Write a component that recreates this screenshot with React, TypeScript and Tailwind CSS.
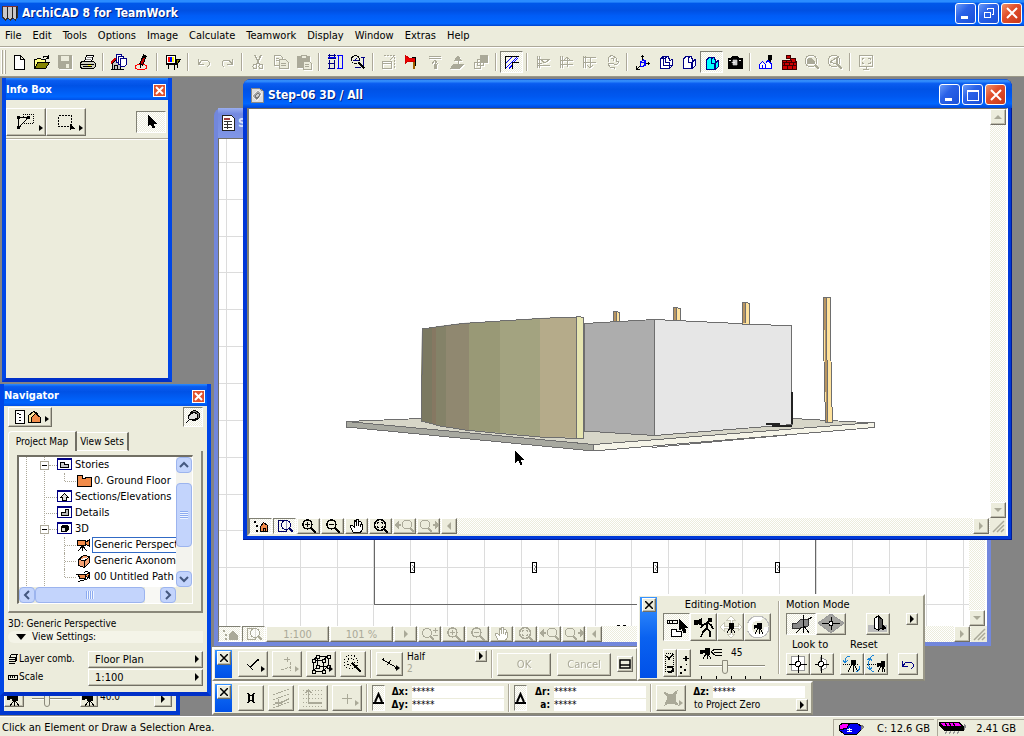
import type { ReactNode } from 'react';
import clsx from 'clsx';

const FACE = 'bg-[#ececdc]';
const DITHER = 'bg-[repeating-conic-gradient(#fff_0_25%,#ececdc_0_50%)] bg-[length:2px_2px]';
const RAISED =
  'border border-t-white border-l-white border-r-[#716f64] border-b-[#716f64] shadow-[inset_-1px_-1px_0_#bdbbab]';
const PRESSED = 'border border-t-[#808074] border-l-[#808074] border-r-white border-b-white';
const BLUE_TITLE = 'bg-[linear-gradient(#0a48d0_0,#3a96ff_6%,#0a5cf0_16%,#0052e6_35%,#0058f0_60%,#0066ff_85%,#0046d8_100%)]';

interface IconProps {
  children: ReactNode;
  size?: string;
  box?: string;
}

function Icon({ children, size = 'w-4 h-4', box = '0 0 16 16' }: IconProps) {
  return (
    <svg
      className={clsx('shrink-0', size)}
      viewBox={box}
      fill="none"
      stroke="currentColor"
      shapeRendering="crispEdges"
      aria-hidden="true"
    >
      {children}
    </svg>
  );
}

/* ---------- icon drawings ---------- */

const magnifier = (
  <>
    <circle cx="6.5" cy="6.5" r="4.5" strokeWidth="1.4" />
    <path d="M10 10l5 5" strokeWidth="2" />
  </>
);

const camera = (
  <>
    <path d="M1 4h3l2 1V2h5v7H6V7L4 8H1z" fill="currentColor" />
    <path d="M8.5 9v6M8 9.5L4 15M9 9.5L13 15" />
  </>
);

const art = {
  page: <path d="M3.5 1.5h6l4 4v10h-10zM9.5 1.5v4h4" fill="#fff" stroke="#000" />,
  open: (
    <>
      <path d="M.5 14V5.5h2l1-1h3l1 1h4v3" fill="#ffff84" stroke="#000" />
      <path d="M.5 14.5L4 8.5h11.5l-4 6z" fill="#848400" stroke="#000" />
      <path d="M9 3.5c1-2 4-2 5 0M14.5 1v3h-3" stroke="#000" />
    </>
  ),
  save: (
    <>
      <path d="M1.5 1.5h13v13h-12l-1-1z" fill="currentColor" />
      <path d="M4 2h8v5H4z" fill="#ececdc" stroke="none" />
      <path d="M9 10h3v4H9z" fill="#ececdc" stroke="none" />
    </>
  ),
  print: (
    <>
      <path d="M4.5 7.5l2-6h7l-2 6z" fill="#fff" stroke="#000" />
      <path d="M1.5 7.5h12l2 2v3l-2 2h-12l-1-2v-3z" fill="#d0d0c0" stroke="#000" />
      <path d="M1 10.5h13M3 12.5h9" stroke="#000" />
      <path d="M8 11h3v1H8z" fill="#ffff00" stroke="none" />
      <path d="M7 3.5h5M6 5.5h5" stroke="#888" />
    </>
  ),
  pages: (
    <>
      <path d="M1.5 15.5v-6l4-4 4 4v6z" fill="#c8c8c8" stroke="#000" />
      <path d="M0 9.5L5 4" stroke="#d00000" strokeWidth="2" />
      <path d="M5.5.5h5v8h-5z" fill="#fff" stroke="#000084" />
      <path d="M7.5 2.5h5v8h-5z" fill="#fff" stroke="#000084" />
      <path d="M9.5 4.5h6v6l-2 2h-4z" fill="#fff" stroke="#000084" />
      <path d="M3.5 15v-4h3v4M0 15.5h13" stroke="#000" />
    </>
  ),
  pen: (
    <>
      <ellipse cx="7" cy="13" rx="6" ry="2.5" stroke="#f00" />
      <path d="M7 11L11 1" stroke="#000" strokeWidth="4" />
      <path d="M7.5 10L10 4" stroke="#c00000" strokeWidth="2" />
      <path d="M6 10v4" stroke="#000" />
    </>
  ),
  easel: (
    <>
      <path d="M1.5 1.5h9v8h-9z" fill="#fff" stroke="#000" strokeWidth="1.5" />
      <path d="M3 3h2v5H3z" fill="#f00" stroke="none" />
      <path d="M5 3h2v5H5z" fill="#00f" stroke="none" />
      <path d="M7 3h2v5H7z" fill="#ff0" stroke="none" />
      <path d="M11 5.5h4.5L12 10h-1z" fill="#848400" stroke="#000" />
      <path d="M3.5 10v5M9.5 10v6M1 10.5h12M12.5 11v3" stroke="#000" />
    </>
  ),
  undo: <path d="M2.5 5v5.5H8M3 10l3-4h5l2 2v3l-2 2" />,
  redo: <path d="M13.5 5v5.5H8M13 10l-3-4H5L3 8v3l2 2" />,
  cut: (
    <>
      <path d="M5 1l4 9M11 1L7 10" strokeWidth="1.5" />
      <circle cx="5" cy="12.5" r="2" />
      <circle cx="11" cy="12.5" r="2" />
    </>
  ),
  copy: (
    <>
      <path d="M1.5 1.5h6l2 2v8h-8z" />
      <path d="M6.5 5.5h6l3 3v6h-9z" fill="#ececdc" />
      <path d="M3 4.5h3M3 6.5h3M8 9.5h5M8 11.5h5" />
    </>
  ),
  paste: (
    <>
      <path d="M1.5 2.5h12v11h-12z" fill="currentColor" />
      <path d="M5 1h5v3H5z" fill="#ececdc" />
      <path d="M7.5 7.5h6l2 2v6h-8z" fill="#ececdc" />
      <path d="M9 10.5h4M9 12.5h4" />
    </>
  ),
  grid: (
    <>
      <path d="M1 1.5h8M1 4.5h8M1 9.5h7M1 14.5h7M2.5 6v9M7.5 6v9M2.5 0v4M7.5 0v4" stroke="#000084" />
      <path d="M11.5 1v14M15.5 1v14M10 1.5h6M10 14.5h6M1 3.5h8" stroke="#0000ff" />
    </>
  ),
  find: (
    <>
      <circle cx="5.5" cy="5.5" r="4" stroke="#000" />
      <path d="M8.5 8.5l6 6" stroke="#000" strokeWidth="2" />
      <path d="M3 6.5h6M13.5 3v9M11 3.5h4M5 13.5h6M7 4L4 7" stroke="#000084" />
    </>
  ),
  stretch: (
    <>
      <path d="M1.5 7.5h9v7h-9zM1 9.5h9" />
      <path d="M2.5 1.5h11v12" strokeDasharray="2 1" />
      <path d="M9 6l4-4" />
    </>
  ),
  axe: (
    <>
      <path d="M9.5 7v8" stroke="#a06000" strokeWidth="2" />
      <path d="M1.5 1.5L5 4h6v3H5L1.500 9z" fill="#f00000" stroke="#d00000" />
      <path d="M8 3.5h3v4M11.5 8v4" stroke="#000" />
    </>
  ),
  raise: <path d="M2 2.5h12M2 4.5h12M8 6v9M5 10l3-4 3 4M7 10v5M9 10v5" />,
  lift: <path d="M1 14l3-4h10l-4 4zM8 12V4M5 6l3-4 3 4z" fill="currentColor" />,
  layers: (
    <>
      <path d="M1.5 8.5h6v6h-6zM4.5 5.5h6v6h-6z" />
      <path d="M7.5 1.5h7v7h-7z" fill="currentColor" />
    </>
  ),
  hatch: (
    <>
      <path d="M1.5 15V2.5H14.5M14.5 8.5H8.5V15" stroke="#000" />
      <path d="M2 9l6-6M2 14l11-11M5 14.5l3-3M10 8l4-4" stroke="#0000ff" strokeWidth="1.3" />
    </>
  ),
  levelDown: <path d="M2.5 2v12M4.5 2v12M2 5.5h13M2 11.5h13M6 6l4 3 4-3M3 9.5h4" />,
  levelMid: <path d="M2.5 2v12M4.5 2v12M2 6.5h13M2 10.5h13M9 3v10M6 6l3-3 3 3" />,
  levelUp: <path d="M2.5 2v12M4.5 2v12M2 3.5h13M2 8.5h13M9 4v10M6 11l3 3 3-3" />,
  seahorse: <path d="M5 8L4 4l4-3 4 3v3l3 1-3 3-4-2-4 1 2 3h4v2M7 4h2v3" />,
  axes: (
    <>
      <path d="M7.5 7V1M9 9.5h6M6 11l-4 4M6 2.5h3M13.5 8v3M1.5 12v3.5H5" stroke="#000" />
      <path d="M5.5 8l3-2 2 1v4l-2 1h-3zM5 8.500h4v3M9 8l2-1" stroke="#0000ff" />
    </>
  ),
  wireframe: (
    <>
      <path d="M2.5 4.500l3-2h5l1 4 3-1v6l-3 3h-9z" fill="#fff" stroke="#000084" strokeWidth="1.2" />
      <path d="M2 4.500h5v4h4v6M7 4l3-2M5.500 3v9M5 11.500h9" stroke="#000084" />
    </>
  ),
  hidden: (
    <path d="M2.5 4.5l3-2h5l1 4 3-1v6l-3 3h-9zM7 4.500l1 4h3v6M7 4l3-2M11 8l3-2" fill="#fff" stroke="#000084" strokeWidth="1.2" />
  ),
  shaded: (
    <path d="M2.5 5.5l3-2h5l1 4 3-1v6l-3 3h-9zM7 5.500l1 4h3v6M7 5l3-2M11 9l3-2" fill="#00ffff" stroke="#000084" strokeWidth="1.2" />
  ),
  photo: (
    <>
      <path d="M1 4h3l2-2h4l2 2h3v10H1z" fill="#000" stroke="#000" />
      <circle cx="8" cy="8.5" r="3" fill="#ccc" stroke="#444" />
      <path d="M2 6.500h2M12 6.500h2M6 8h2" stroke="#eee" />
    </>
  ),
  brushHouse: (
    <>
      <path d="M10.500 1h3v4l-1 2h-1l-1-2zM12 8v2" fill="#000" stroke="#000" />
      <path d="M1.500 14.500v-4l3-3 3 3v4zM8 8.500l2-2 3 3v5H8M4.500 14v-3" fill="#fff" stroke="#0000ff" />
    </>
  ),
  bricks: (
    <>
      <path d="M1 6h8V4h5v3h1v8H1zM5 1h4v3H5z" fill="#d00000" stroke="#400000" />
      <path d="M1 8.500h14M1 11.500h14M5 6v2M10 6v2M3 9v2M8 9v2M12 9v2M6 12v3M11 12v3" stroke="#400000" />
    </>
  ),
  lensCam: (
    <>
      <circle cx="7" cy="7" r="6" />
      <path d="M11 11l4 4" strokeWidth="2" />
      <path d="M3 9V6l3-2 4 3v2z" fill="currentColor" />
    </>
  ),
  lensMeasure: (
    <>
      <circle cx="7" cy="7" r="6" />
      <path d="M11 11l4 4" strokeWidth="2" />
      <path d="M3 8l6-4v6zM10 3v9" />
    </>
  ),
  monitor: (
    <path d="M1.500 1.500h13v11h-13zM5 15.500h6M8 12v3M4 6V4.500h2M10 4.500h2V6M4 8v1.500h2M10 9.500h2V8" />
  ),
  tree: (
    <>
      <path d="M1 4.500h2M3 8.500h2M3 12.500h2" strokeWidth="2" />
      <path d="M7 13V9l4-4 4 4v4z" fill="currentColor" />
    </>
  ),
  treeOrange: (
    <>
      <path d="M1 4h2M3 8h2M3 12.500h2" strokeWidth="2" />
      <path d="M7.500 13.500V8.500l3-4 4 3 .5 6z" fill="#f28c4a" />
      <path d="M10.500 13v-3h2v3" />
    </>
  ),
  preview: (
    <>
      <path d="M1.500 2.500h8v11h-8z" />
      <circle cx="9" cy="7" r="4.500" fill="#fff" fillOpacity=".6" />
      <path d="M12 10l4 4" strokeWidth="2" />
    </>
  ),
  zoomIn: (
    <>
      {magnifier}
      <path d="M4 6.500h5M6.500 4v5" strokeWidth="1.500" />
    </>
  ),
  zoomOut: (
    <>
      {magnifier}
      <path d="M4 6.500h5" strokeWidth="1.500" />
    </>
  ),
  zoomPm: (
    <>
      <circle cx="5" cy="7" r="4.500" />
      <path d="M8 10l4 4" strokeWidth="2" />
      <path d="M11 4.500h5M13.500 2v5M11 9.500h5" strokeWidth="1.500" />
    </>
  ),
  fit: (
    <>
      <circle cx="7" cy="7" r="5.500" strokeWidth="1.500" />
      <path d="M11 11l4 4" strokeWidth="2" />
      <path d="M4.500 6V4.500H6M8 4.500h1.500V6M9.500 8v1.500H8M6 9.500H4.500V8" />
    </>
  ),
  zoomPrev: (
    <>
      <path d="M1 7h5M3 5L1 7l2 2z" strokeWidth="1.500" fill="currentColor" />
      <circle cx="12" cy="6.500" r="4.500" />
      <path d="M15 10l4 4" strokeWidth="2" />
    </>
  ),
  zoomNext: (
    <>
      <circle cx="6" cy="6.500" r="4.500" />
      <path d="M9 10l4 4" strokeWidth="2" />
      <path d="M14 7h5M17 5l2 2-2 2z" strokeWidth="1.500" fill="currentColor" />
    </>
  ),
  hand: (
    <path
      fill="#fff"
      d="M4.500 14.500L1.500 9.500V7.500H3.500L5 9V3.500L6 2.500L7 3.500V2L8.500 1.500L9.500 2V3.500L11 3L12 4V6L13.500 6V11L11.500 14.500ZM7.500 4v4M9.500 4v4M11.500 6v3"
    />
  ),
};

function Tri({ dir }: { dir: 'right' | 'left' | 'down' | 'up' }) {
  const d = {
    right: 'M2 0l4 4-4 4z',
    left: 'M6 0L2 4l4 4z',
    down: 'M0 2h8L4 6z',
    up: 'M0 6h8L4 2z',
  }[dir];
  return (
    <svg className="w-2 h-2 shrink-0" viewBox="0 0 8 8" fill="currentColor" aria-hidden="true">
      <path d={d} />
    </svg>
  );
}

interface BtnProps {
  label: string;
  className?: string;
  children?: ReactNode;
  pressed?: boolean;
  disabled?: boolean;
  more?: boolean;
}

function Btn({ label, className, children, pressed, disabled, more }: BtnProps) {
  return (
    <button
      type="button"
      aria-label={label}
      disabled={disabled}
      className={clsx(
        'relative flex shrink-0 items-center justify-center overflow-hidden',
        pressed ? [PRESSED, DITHER] : [RAISED, FACE],
        disabled && 'text-[#aaa998]',
        className,
      )}
    >
      {children}
      {more && (
        <svg className="absolute right-0.5 bottom-1 w-1 h-1.5" viewBox="0 0 4 6" fill="currentColor" aria-hidden="true">
          <path d="M0 0l4 3-4 3z" />
        </svg>
      )}
    </button>
  );
}

/* ---------- main window chrome ---------- */

function CaptionButtons({ restore }: { restore?: boolean }) {
  const base = 'flex w-[21px] h-[21px] items-center justify-center rounded-[3px] border border-white text-white';
  const blue = 'bg-[linear-gradient(135deg,#6a9bf8,#2a62e8_40%,#1a4fd8)]';
  return (
    <div className="flex shrink-0 gap-0.5">
      <button type="button" aria-label="Minimize" className={clsx(base, blue)}>
        <Icon><path d="M3 12.500h7" strokeWidth="3" /></Icon>
      </button>
      <button type="button" aria-label={restore ? 'Restore' : 'Maximize'} className={clsx(base, blue)}>
        <Icon>
          {restore ? (
            <path d="M3.500 7.500h6v5h-6zM3 7h7M6.500 5V3.500h6v6H11M6 3h7" />
          ) : (
            <>
              <path d="M2.500 3.500h11v10h-11z" />
              <path d="M2 4h12" strokeWidth="2" />
            </>
          )}
        </Icon>
      </button>
      <button
        type="button"
        aria-label="Close"
        className={clsx(base, 'bg-[linear-gradient(135deg,#f0946c,#e2502c_40%,#c8381a)]')}
      >
        <Icon><path d="M3 3l10 10M13 3L3 13" strokeWidth="2" shapeRendering="auto" /></Icon>
      </button>
    </div>
  );
}

function TitleBar() {
  return (
    <header className="flex h-[26px] shrink-0 items-center gap-1 bg-[linear-gradient(#2a8cff_0,#2a8cff_8%,#0058ea_12%,#0050e2_40%,#005cf6_60%,#0066ff_90%,#0042cc_100%)] pr-0.5 pl-0.5 text-white">
      <Icon>
        <path d="M.5 1h15v11l-2 3-3-2-2 2-3-2-2 2-3-3z" fill="#c8c8c8" stroke="#333" />
        <path d="M5.500 1v13M10.500 1v13M14.500 2v11" stroke="#222" strokeWidth="1.500" />
        <path d="M1 1.500h14" stroke="#803030" />
      </Icon>
      <h1 className="flex-1 truncate text-[12px] leading-4 font-bold [text-shadow:1px_1px_#00207c]">
        ArchiCAD 8 for TeamWork
      </h1>
      <CaptionButtons restore />
    </header>
  );
}

const menus = ['File', 'Edit', 'Tools', 'Options', 'Image', 'Calculate', 'Teamwork', 'Display', 'Window', 'Extras', 'Help'];

function MenuBar() {
  return (
    <nav className="flex h-[21px] shrink-0 items-center gap-[11px] border-b border-[#aca899] pl-[5px]">
      {menus.map((m) => (
        <button key={m} type="button" className="leading-4">{m}</button>
      ))}
    </nav>
  );
}

interface Tool {
  name: string;
  icon: ReactNode;
  off?: boolean;
  on?: boolean;
}

const toolGroups: Tool[][] = [
  [
    { name: 'New', icon: art.page },
    { name: 'Open', icon: art.open },
    { name: 'Save', icon: art.save, off: true },
    { name: 'Print', icon: art.print },
  ],
  [
    { name: 'Send changes', icon: art.pages },
    { name: 'Mark up', icon: art.pen },
  ],
  [{ name: 'Plot', icon: art.easel }],
  [
    { name: 'Undo', icon: art.undo, off: true },
    { name: 'Redo', icon: art.redo, off: true },
  ],
  [
    { name: 'Cut', icon: art.cut, off: true },
    { name: 'Copy', icon: art.copy, off: true },
    { name: 'Paste', icon: art.paste, off: true },
  ],
  [
    { name: 'Grids', icon: art.grid },
    { name: 'Find and select', icon: art.find },
  ],
  [
    { name: 'Resize', icon: art.stretch, off: true },
    { name: 'Split', icon: art.axe },
    { name: 'Adjust', icon: art.raise, off: true },
    { name: 'Elevate', icon: art.lift, off: true },
    { name: 'Bring forward', icon: art.layers, off: true },
  ],
  [{ name: 'Hatching', icon: art.hatch, on: true }],
  [
    { name: 'Level down', icon: art.levelDown, off: true },
    { name: 'Level', icon: art.levelMid, off: true },
    { name: 'Level up', icon: art.levelUp, off: true },
    { name: 'Morph', icon: art.seahorse, off: true },
  ],
  [
    { name: '3D projection', icon: art.axes },
    { name: 'Wireframe', icon: art.wireframe },
    { name: 'Hidden line', icon: art.hidden },
    { name: 'Shading', icon: art.shaded, on: true },
    { name: 'PhotoRender', icon: art.photo },
  ],
  [
    { name: 'Paint model', icon: art.brushHouse },
    { name: 'Materials', icon: art.bricks },
    { name: 'Zoom camera', icon: art.lensCam, off: true },
    { name: 'Zoom measure', icon: art.lensMeasure, off: true },
  ],
  [{ name: 'Full screen', icon: art.monitor, off: true }],
];

function Toolbar() {
  return (
    <div className="flex h-[30px] shrink-0 items-center border-t border-b border-t-white border-b-[#9a9888] pl-px">
      <div className="flex h-6 w-1.5 gap-px">
        <span className="w-0.5 border-r border-l border-l-white border-r-[#aca899]" />
        <span className="w-0.5 border-r border-l border-l-white border-r-[#aca899]" />
      </div>
      {toolGroups.map((group, i) => (
        <div key={i} className="flex items-center">
          {i > 0 && (
            <span className="flex w-2 justify-center">
              <span className="h-[18px] w-0.5 border-l border-r border-l-[#aca899] border-r-white" />
            </span>
          )}
          {group.map((t) => (
            <button
              key={t.name}
              type="button"
              aria-label={t.name}
              disabled={t.off}
              className={clsx(
                'flex h-[22px] w-[23px] items-center justify-center',
                t.on && [PRESSED, DITHER],
                t.off && 'text-[#aaa998] drop-shadow-[1px_1px_0_#fff]',
              )}
            >
              <Icon>{t.icon}</Icon>
            </button>
          ))}
        </div>
      ))}
    </div>
  );
}

/* ---------- document windows ---------- */

interface DocTool {
  name: string;
  icon: ReactNode;
  wide?: boolean;
}

const docTools: DocTool[] = [
  { name: 'Zoom in', icon: art.zoomIn },
  { name: 'Zoom out', icon: art.zoomOut },
  { name: 'Pan', icon: art.hand },
  { name: 'Fit in window', icon: art.fit },
  { name: 'Previous zoom', icon: art.zoomPrev, wide: true },
  { name: 'Next zoom', icon: art.zoomNext, wide: true },
];

function VScroll() {
  return (
    <div className={clsx('flex w-4 shrink-0 flex-col justify-between', DITHER)}>
      <Btn label="Scroll up" disabled className="h-4 w-4"><Tri dir="up" /></Btn>
      <Btn label="Scroll down" disabled className="h-4 w-4"><Tri dir="down" /></Btn>
    </div>
  );
}

function DocBar({ dim }: { dim?: boolean }) {
  return (
    <div className={clsx('flex h-4 shrink-0 gap-px', DITHER)}>
      <Btn label="Navigator" pressed disabled={dim} className="w-[23px]">
        <Icon>{dim ? art.tree : art.treeOrange}</Icon>
      </Btn>
      <Btn label="Preview" pressed disabled={dim} className={clsx('w-[23px]', !dim && 'text-[#000060]')}>
        <Icon>{art.preview}</Icon>
      </Btn>
      {dim && (
        <>
          <Btn label="Scale" disabled className="w-[63px]">1:100</Btn>
          <Btn label="Zoom" disabled className="w-[63px]">101 %</Btn>
          <Btn label="Zoom options" disabled className="w-[23px]"><Tri dir="right" /></Btn>
          <Btn label="Zoom factor" disabled className="w-[23px]"><Icon>{art.zoomPm}</Icon></Btn>
        </>
      )}
      {docTools.map((t) => (
        <Btn key={t.name} label={t.name} disabled={dim || t.wide} className="w-[23px]">
          <Icon box={t.wide ? '0 0 20 16' : '0 0 16 16'} size={t.wide ? 'w-5 h-4' : 'w-4 h-4'}>{t.icon}</Icon>
        </Btn>
      ))}
      <Btn label="Scroll left" disabled className="w-4"><Tri dir="left" /></Btn>
      <div className="flex-1" />
      <Btn label="Scroll right" disabled className="w-4"><Tri dir="right" /></Btn>
      <span className={clsx('w-4', FACE)}>
        <svg className="h-4 w-4" viewBox="0 0 16 16" stroke="#aaa998" strokeWidth="1.5" aria-hidden="true">
          <path d="M3 14L14 3M7 14l7-7M11 14l3-3" />
        </svg>
      </span>
    </div>
  );
}

const gridX = Array.from({ length: 21 }, (_, i) => Math.round(226 + i * 36.85));
const gridY = Array.from({ length: 14 }, (_, i) => Math.round(125 + i * 36.85));

function PlanCanvas() {
  return (
    <svg
      className="min-w-0 flex-1 bg-white"
      viewBox="219 139 751 487"
      preserveAspectRatio="xMinYMin slice"
      shapeRendering="crispEdges"
      fill="none"
      role="img"
      aria-label="Floor plan"
    >
      {gridX.map((x) => <path key={x} d={`M${x + 0.5} 139V626`} stroke="#dcdcdc" />)}
      {gridY.map((y) => <path key={y} d={`M219 ${y + 0.5}H970`} stroke="#dcdcdc" />)}
      <path d="M374.500 300V604.500H815.500V300" stroke="#686868" />
      {[410, 532, 653, 775].map((x) => (
        <g key={x}>
          <rect x={x + 0.5} y="562.5" width="4" height="10" fill="#fff" stroke="#000" />
          <path d={`M${x + 2} 565l2 2-2 2 2 2`} stroke="#888" />
        </g>
      ))}
      <path d="M617 625.500h3M623 625.500h3" stroke="#000" />
    </svg>
  );
}

const bands = [
  { x: 421, w: 11, c: '#7b7961' },
  { x: 432, w: 4, c: '#867862' },
  { x: 436, w: 10, c: '#848268' },
  { x: 446, w: 23, c: '#908870' },
  { x: 469, w: 31, c: '#999976' },
  { x: 500, w: 40, c: '#a3a380' },
  { x: 540, w: 36, c: '#b5ab8a' },
];

function ModelView() {
  const edge = '#6e6e6e';
  return (
    <svg
      className="min-w-0 flex-1 bg-white"
      viewBox="249 109 741 409"
      preserveAspectRatio="xMinYMin slice"
      shapeRendering="crispEdges"
      role="img"
      aria-label="3D model"
    >
      <defs>
        <clipPath id="curve">
          <path d="M422 329L440 326L463 323L500 321L540 318L577 317V438L540 437L500 433L465 430L440 426L421 421V375Z" />
        </clipPath>
      </defs>
      <g stroke={edge}>
        <path d="M346.500 421.500L421 418.500L600 412L793 418.500L874.500 423L593.500 444.500Z" fill="#d7d6c8" />
        <path d="M346.500 421.500L593.500 444.500V451L346.500 427Z" fill="#a8a9a0" />
        <path d="M593.500 444.500L874.500 422.500V427.500L593.500 451Z" fill="#f5f4e8" />
        <path d="M652 447.500L793 434.500" fill="none" />
      </g>
      <g clipPath="url(#curve)">
        {bands.map((b) => <rect key={b.x} x={b.x} y="310" width={b.w} height="132" fill={b.c} />)}
      </g>
      <g stroke={edge}>
        <path d="M422.500 375V329L440 326.500L463 323.500L500 321L540 318.500L570 317H577M421.500 375V421L440 426L465 430L500 433.500L540 437L577 438.500" fill="none" />
        <path d="M584 323.500L654.500 319.500V435.500L584 431Z" fill="#adadad" />
        <path d="M654.500 319.500L791.500 326V376L792.500 424.500L654.500 435.500Z" fill="#e6e6e6" />
        <path d="M576.500 317L580 316.500L583.500 318V438.500H576V377L576.500 370Z" fill="#e6e5b0" />
        <path d="M613.500 321V311.500H617L619.500 313V321" fill="#ffe29c" />
        <path d="M673.500 320V307.500H677L680.500 309V320.500" fill="#ffe29c" />
        <path d="M742.500 324V302.500H747L749.500 304V324Z" fill="#ffe29c" />
        <path d="M823.500 297.500H830.500V330L831.500 391L832.500 422.500H826L824.500 391L823.500 330Z" fill="#ffe29c" />
      </g>
      <path
        d="M614 312h2v9h-2zM674 308h2v12h-2zM743 303h2v20h-2zM824 298h2l1 62 1 62h-2l-1-62z"
        fill="#b89460"
      />
      <path d="M616.500 312v9M676.500 308v12M745.500 303v20M826.500 298v62M827.500 360v62" stroke={edge} />
      <path d="M792 392V424M766 424H780M772 426H792" stroke="#222" strokeWidth="2" />
      <path d="M515 451V463L518 460.500L520.500 465H522.500L521 460H524Z" fill="#000" />
    </svg>
  );
}

function PlanWindow() {
  return (
    <section className="absolute top-[31px] left-[214px] flex h-[538px] w-[777px] flex-col rounded-t-lg border-4 border-t-0 border-[#7287dc] bg-[#7287dc]">
      <header className="flex h-[30px] shrink-0 items-center gap-1.5 bg-[linear-gradient(#9aaef0,#7389e0_20%,#8096e6)] px-0.5">
        <Icon>
          <path d="M2.500.5h9l3 3v12h-12z" fill="#fff" stroke="#222" />
          <path d="M4 6.500h8M4 9.500h8M4 12.500h8M7.500 6v8" stroke="#333" strokeWidth="1.5" />
          <path d="M4 3.500h6" stroke="#a04040" strokeWidth="2" />
        </Icon>
        <h2 className="-ml-1 text-[12px] font-bold text-[#dbe3fb]">S</h2>
      </header>
      <div className="flex min-h-0 flex-1 border-t border-r-2 border-l border-t-[#716f64] border-r-white border-l-[#716f64]">
        <PlanCanvas />
        <VScroll />
      </div>
      <DocBar dim />
    </section>
  );
}

function ModelWindow() {
  return (
    <section className="absolute top-0.5 left-[243px] flex h-[461px] w-[769px] flex-col overflow-hidden rounded-t-lg bg-[#0038d8] px-1 pb-1 shadow-[inset_-1px_-1px_0_#001c98]">
      <header className={clsx('-mx-1 flex h-[29px] shrink-0 items-center gap-[3px] px-1.5 pt-0.5 text-white', BLUE_TITLE)}>
        <Icon>
          <path d="M2.500 1.500h8l4 3v11h-12z" fill="#ddd" stroke="#888" />
          <path d="M3 9l6-6 4 4-5 7z" fill="#a8a8a8" stroke="#eee" />
          <path d="M6 9l3-3 2 2-3 4z" fill="#ccc" stroke="#777" />
        </Icon>
        <h2 className="flex-1 truncate text-[12px] leading-4 font-bold [text-shadow:1px_1px_#00207c]">Step-06 3D / All</h2>
        <CaptionButtons />
      </header>
      <div className="flex min-h-0 flex-1 flex-col border-t border-r-2 border-b-2 border-l-2 border-t-[#716f64] border-r-white border-b-[#ececdc] border-l-[#808074]">
        <div className="flex min-h-0 flex-1">
          <ModelView />
          <VScroll />
        </div>
        <DocBar />
      </div>
    </section>
  );
}

/* ---------- palettes ---------- */

function PaletteTitle({ title }: { title: string }) {
  return (
    <header className="flex h-[22px] shrink-0 items-center justify-between bg-[linear-gradient(#2a8cff_0,#0a5cf0_12%,#0052e6_35%,#0066ff_85%,#0050e6_100%)] pt-0.5 text-white">
      <h2 className="text-[11px] leading-4 font-bold">{title}</h2>
      <button
        type="button"
        aria-label={`Close ${title}`}
        className="mr-0.5 flex h-[13px] w-[13px] items-center justify-center border border-white bg-[#e0532f]"
      >
        <svg className="h-[9px] w-[9px]" viewBox="0 0 9 9" stroke="#fff" strokeWidth="2" aria-hidden="true">
          <path d="M1 1l7 7M8 1L1 8" />
        </svg>
      </button>
    </header>
  );
}

function InfoBox() {
  return (
    <section className="absolute top-px left-0.5 flex h-[304px] w-[170px] flex-col border-4 border-t-0 border-[#0046e6] border-b-[#0030c8]">
      <PaletteTitle title="Info Box" />
      <div className={clsx('flex flex-1 flex-col', FACE)}>
        <div className="flex items-center border-b border-[#aca899] pt-2 pb-0.5 shadow-[0_1px_0_#fff]">
          <Btn label="Geometry method" more className="h-[28px] w-10">
            <Icon size="w-5 h-5" box="0 0 20 20">
              <path d="M2.500 5v11L12 5.500z" stroke="#000" />
              <path d="M1 4h3v3H1zM1 14h3v3H1zM11 4h3v3h-3z" fill="#000" stroke="none" />
              <path d="M6 11.500h11.500V2.500H7V5" stroke="#000" strokeDasharray="1 1" />
            </Icon>
          </Btn>
          <Btn label="Marquee method" more className="h-[28px] w-10">
            <Icon size="w-5 h-5" box="0 0 20 20">
              <path d="M2.500 3.500h13v11h-13z" strokeDasharray="2 1" />
              <path d="M14 12v6l2-2h2z" fill="currentColor" />
            </Icon>
          </Btn>
          <Btn label="Arrow tool" pressed className="mr-0.5 ml-auto h-[22px] w-[30px]">
            <Icon><path d="M5 1v11l3-2.500L10 14l1.500-.5L9.500 9H13z" fill="#000" stroke="#000" /></Icon>
          </Btn>
        </div>
      </div>
    </section>
  );
}

interface TreeRow {
  text: string;
  level: number;
  open?: boolean;
  active?: boolean;
  last?: boolean;
  icon: ReactNode;
}

const frame = (
  <>
    <path d="M.5 1.500h14v11H.5z" fill="#fff" stroke="#000084" />
    <path d="M0 2h15" stroke="#000084" strokeWidth="2" />
  </>
);

const treeRows: TreeRow[] = [
  { text: 'Stories', level: 0, open: true, icon: <>{frame}<path d="M3.500 5.500h4v2h4v3h-8z" fill="#ccc" stroke="#000" /></> },
  { text: '0. Ground Floor', level: 1, last: true, icon: <path d="M1 2.500h5v3h3v-1h6v9H1z" fill="#f28c4a" stroke="#000" /> },
  { text: 'Sections/Elevations', level: 0, icon: <>{frame}<path d="M5.500 11.500v-3h-2l4-4 4 4h-2v3z" fill="#ddd" stroke="#000" /></> },
  { text: 'Details', level: 0, icon: <>{frame}<path d="M8.500 4.500h3v6h-7v-3h4z" fill="#bbb" stroke="#000" /></> },
  {
    text: '3D', level: 0, open: true,
    icon: <>{frame}<path d="M4 6l3-2 4 1v4l-3 2-4-1z" fill="#000" stroke="#000" /><path d="M5 7h3v3H5z" fill="#ddd" stroke="none" /></>,
  },
  {
    text: 'Generic Perspect', level: 1, active: true,
    icon: <><path d="M1.500 3.500h8v5h-8zM9 6l4-3v6L9 7z" fill="#f28c4a" stroke="#000" /><path d="M6.500 9v5M6 9.500L2 14M7 9.500l4 4.500" stroke="#000" /></>,
  },
  {
    text: 'Generic Axonome', level: 1,
    icon: <path d="M2.500 6.500l5-4 6 1v6l-5 5-6-2zM3 6.500l5.500 1.500L13 4M8.500 8v6" fill="#f6a070" stroke="#000" />,
  },
  {
    text: '00 Untitled Path', level: 1, last: true,
    icon: <><path d="M2 5.500h7v4H4zM9 6l4-2v5l-4-2z" fill="#f28c4a" stroke="#000" /><path d="M0 5h3M2 13c3-3 7 0 10-4 3-5-1-9-4-5" stroke="#000" /></>,
  },
];

function TreeItem({ row }: { row: TreeRow }) {
  return (
    <li className={clsx('flex h-4 items-center whitespace-nowrap', row.level === 1 ? 'pl-[45px]' : 'pl-[21px]')}>
      {row.level === 0 ? (
        <span className="flex h-4 w-[17px] shrink-0 items-center">
          {row.open && (
            <span className="flex h-[9px] w-[9px] items-center justify-center border border-[#aca899] bg-white">
              <span className="h-px w-[5px] bg-black" />
            </span>
          )}
          <span className={clsx('flex-1 border-t border-dotted border-[#aca899]', !row.open && 'ml-1')} />
        </span>
      ) : (
        <span className="flex h-4 w-3 shrink-0 items-center">
          <span className={clsx('border-l border-dotted border-[#aca899]', row.last ? 'h-2 self-start' : 'h-4')} />
          <span className="flex-1 border-t border-dotted border-[#aca899]" />
        </span>
      )}
      <Icon>{row.icon}</Icon>
      <span className={clsx('border px-px leading-[14px]', row.active ? 'border-[#316ac5]' : 'border-transparent')}>{row.text}</span>
    </li>
  );
}

function XpScrollButton({ label, d }: { label: string; d: string }) {
  return (
    <button
      type="button"
      aria-label={label}
      className="flex h-4 w-4 shrink-0 items-center justify-center rounded-sm border border-[#9cb4ee] bg-[#c3d4fc]"
    >
      <svg className="h-2.5 w-2.5" viewBox="0 0 10 10" fill="none" stroke="#44587f" strokeWidth="2" aria-hidden="true">
        <path d={d} />
      </svg>
    </button>
  );
}

function SettingRow({ id, label, icon, value }: { id: string; label: string; icon: ReactNode; value: string }) {
  return (
    <div className="flex h-[18px] items-center">
      <label htmlFor={id} className="flex w-20 items-center gap-px whitespace-nowrap text-[10px]">
        <Icon size="w-2.5 h-2.5" box="0 0 10 10">{icon}</Icon>
        {label}
      </label>
      <div className="relative flex-1">
        <select id={id} defaultValue={value} className={clsx('block h-[17px] w-full appearance-none px-1.5', RAISED, FACE)}>
          <option>{value}</option>
        </select>
        <span className="pointer-events-none absolute top-1 right-0.5"><Tri dir="right" /></span>
      </div>
    </div>
  );
}

function Navigator() {
  return (
    <section className="absolute top-[307px] left-0 flex h-[312px] w-[211px] flex-col border-4 border-t-0 border-[#0046e6] border-b-[#0030c8]">
      <PaletteTitle title="Navigator" />
      <div className={clsx('flex flex-1 flex-col px-1 pt-px', FACE)}>
        <div className="flex items-center justify-between">
          <Btn label="Navigator view" more className="h-5 w-[44px] pr-1">
            <Icon size="w-8 h-4" box="0 0 32 16">
              <path d="M3.500 1.500h9v13h-9z" fill="#fff" stroke="#000" />
              <path d="M5 4.500h2M7 8.500h2M7 11.500h2M7 5.500h2" stroke="#000" strokeWidth="1.5" />
              <path d="M16.500 13.500V6.500l5-4 4 2v9z" fill="#fce29a" stroke="#000" />
              <path d="M19.500 13.500V8.500l4-4 5 4v5z" fill="#f28c4a" stroke="#000" />
            </Icon>
          </Btn>
          <Btn label="Project navigator" pressed className="h-5 w-5">
            <Icon>
              <path d="M5 4l5-3 4 3v5l-4 3-5-2z" fill="#888" stroke="#000" />
              <path d="M3 7l6-4 3 2v4l-3 2-5-1z" fill="#ddd" stroke="#000" />
              <path d="M1 14l4-4" stroke="#000" />
            </Icon>
          </Btn>
        </div>
        <div role="tablist" className="mt-1 flex items-end">
          <button type="button" role="tab" aria-selected="true" className="h-5 w-[69px] rounded-tl border-t border-r-2 border-l border-t-white border-r-[#716f64] border-l-white text-[10px] whitespace-nowrap">
            Project Map
          </button>
          <button type="button" role="tab" aria-selected="false" className="h-[19px] w-[52px] border-t border-r-2 border-b border-t-white border-r-[#716f64] border-b-white text-[10px] whitespace-nowrap">
            View Sets
          </button>
        </div>
        <div className="border-r-2 border-b-2 border-l border-r-[#8a887a] border-b-[#8a887a] border-l-white pt-1 pr-2 pb-[7px] pl-2">
          <div className="border-t-2 border-r border-b border-l-2 border-t-[#716f64] border-r-white border-b-white border-l-[#716f64] bg-white">
            <div className="flex">
              <ul className="h-[130px] min-w-0 flex-1 overflow-hidden [background:linear-gradient(#aca899_50%,#fff_50%)_7px_0/1px_2px_repeat-y,linear-gradient(#aca899_50%,#fff_50%)_25px_0/1px_2px_repeat-y]">
                {treeRows.map((r) => <TreeItem key={r.text} row={r} />)}
              </ul>
              <div className="flex w-4 shrink-0 flex-col bg-[#f3f3ee]">
                <XpScrollButton label="Scroll tree up" d="M1 7l4-4 4 4" />
                <span className="mt-2.5 flex flex-1 items-center justify-center rounded-sm border border-[#9cb4ee] bg-[#c3d4fc]">
                  <span className="h-2 w-2 bg-[repeating-linear-gradient(#8caaf0_0_1px,#eef4ff_1px_2px)]" />
                </span>
                <span className="h-6" />
                <XpScrollButton label="Scroll tree down" d="M1 3l4 4 4-4" />
              </div>
            </div>
            <div className={clsx('flex pr-4', FACE)}>
              <XpScrollButton label="Scroll tree left" d="M7 1L3 5l4 4" />
              <span className="flex w-[110px] items-center justify-center rounded-sm border border-[#9cb4ee] bg-[#c3d4fc]">
                <span className="h-2 w-2 bg-[repeating-linear-gradient(90deg,#8caaf0_0_1px,#eef4ff_1px_2px)]" />
              </span>
              <span className="flex-1 bg-[#f8f8f4]" />
              <XpScrollButton label="Scroll tree right" d="M3 1l4 4-4 4" />
            </div>
          </div>
        </div>
        <p className="mt-1 h-[14px] text-[10px] leading-[14px]">3D: Generic Perspective</p>
        <button type="button" className="flex h-3 items-center gap-1.5 rounded-l-full bg-[#f4f4e8] pl-2 text-[10px]">
          <svg className="h-2.5 w-2.5" viewBox="0 0 10 10" aria-hidden="true"><path d="M0 2h10L5 8z" /></svg>
          View Settings:
        </button>
        <div className="mt-[7px] flex flex-col">
          <SettingRow id="layers" label="Layer comb." value="Floor Plan" icon={<path d="M3.500.5h6l-2 3h-6zM1 5.500h6l2-2M1 7.500h6l2-2M1 9.500h6" />} />
          <SettingRow id="scale" label="Scale" value="1:100" icon={<path d="M.5 3.500h9v4h-9zM2.500 4v2M4.500 4v2M6.500 4v2" />} />
        </div>
      </div>
    </section>
  );
}

const SLIDER =
  'appearance-none bg-transparent [&::-webkit-slider-runnable-track]:h-0.5 [&::-webkit-slider-runnable-track]:border-t [&::-webkit-slider-runnable-track]:border-[#8a887a] [&::-webkit-slider-runnable-track]:bg-white [&::-webkit-slider-thumb]:-mt-1.5 [&::-webkit-slider-thumb]:h-3.5 [&::-webkit-slider-thumb]:w-1.5 [&::-webkit-slider-thumb]:appearance-none [&::-webkit-slider-thumb]:rounded-b-md [&::-webkit-slider-thumb]:border [&::-webkit-slider-thumb]:border-[#8a887a] [&::-webkit-slider-thumb]:bg-[#ececdc]';

function ViewPalette() {
  return (
    <section className="absolute top-[580px] left-0 flex h-[58px] w-[180px] flex-col justify-end border-4 border-[#0038d0]">
      <div className={clsx('flex flex-1 items-end gap-2 pb-1', FACE)}>
        <Btn label="Zoom camera out" className="h-4 w-5"><Icon>{camera}</Icon></Btn>
        <input type="range" aria-label="View cone" defaultValue={35} className={clsx('h-4 w-10', SLIDER)} />
        <Btn label="Zoom camera in" className="h-4 w-[18px]"><Icon>{camera}</Icon></Btn>
        <span className="-ml-1.5 h-4 text-[10px] leading-3">40.0°</span>
        <Btn label="View options" className="mr-1 ml-auto h-4 w-[18px]"><Tri dir="right" /></Btn>
      </div>
    </section>
  );
}

function Handle({ label }: { label: string }) {
  return (
    <div className="flex w-[17px] shrink-0 justify-center self-stretch bg-[linear-gradient(#3a94ff,#0a62f0_50%,#0050e8)] pt-px">
      <Btn label={label} className="h-3.5 w-3.5">
        <svg className="h-2 w-2" viewBox="0 0 8 8" stroke="#000" strokeWidth="1.500" aria-hidden="true">
          <path d="M0 0l8 8M8 0L0 8" />
        </svg>
      </Btn>
    </div>
  );
}

function Divider() {
  return <span className="w-0.5 shrink-0 self-stretch border-l border-r border-l-[#aca899] border-r-white" />;
}

const BAR = 'absolute flex items-center border-2 border-t-white border-l-white border-r-[#9a9888] border-b-[#8a887a]';

function ControlBox() {
  return (
    <section className={clsx(BAR, FACE, 'top-[570px] left-[212px] h-[34px] w-[426px] gap-1 p-px')} aria-label="Control box">
      <Handle label="Close control box" />
      <Btn label="Relative construction" more className="ml-0.5 h-[26px] w-[30px]">
        <Icon><path d="M2 8l6 6M5 12l8-9M12 4h2" strokeWidth="1.3" /></Icon>
      </Btn>
      <Btn label="Snap guides" more disabled className="h-[26px] w-[30px]">
        <Icon><path d="M5 3.500h6M8 1v5" /><path d="M2 14l9-3M12 6l-1 9" strokeDasharray="3 1" /></Icon>
      </Btn>
      <Btn label="Element group" more className="h-[26px] w-[30px]">
        <Icon size="w-5 h-5" box="0 0 20 20">
          <path d="M2.500 6.500h10v11h-10zM6.500 2.500h11v10h-11zM2 17l5-5M12 17l5-5M2 6l5-4M12 6l5-4" />
          <path d="M1 5h3v3H1zM11 5h3v3h-3zM1 16h3v3H1zM11 16h3v3h-3zM5 1h3v3H5zM16 1h3v3h-3zM16 11h3v3h-3zM5 11h3v3H5z" fill="#ececdc" />
        </Icon>
      </Btn>
      <Btn label="Magic wand" className="h-[26px] w-[26px]">
        <Icon size="w-5 h-5" box="0 0 20 20">
          <circle cx="8" cy="8" r="7" strokeDasharray="1 2" />
          <circle cx="8" cy="8" r="4" strokeDasharray="1 2" />
          <path d="M9 9l9 9" strokeWidth="2" />
        </Icon>
      </Btn>
      <Divider />
      <Btn label="Snap point" more className="h-6 w-[27px]">
        <Icon size="w-5 h-4" box="0 0 20 16"><path d="M2 3l15 9M7 9l4-5M3 2v3M15 13l3-2" /></Icon>
      </Btn>
      <div className="flex h-[26px] w-16 flex-col text-[10px] leading-3">
        <span className="font-medium">Half</span>
        <span className="text-[#aaa998]">2</span>
      </div>
      <Btn label="Snap options" className="h-3 w-3 self-start"><Tri dir="right" /></Btn>
      <Divider />
      <Btn label="OK" disabled className="h-[23px] w-[54px]"><span className="drop-shadow-[1px_1px_0_#fff]">OK</span></Btn>
      <Btn label="Cancel" disabled className="ml-0.5 h-[23px] w-[54px]"><span className="drop-shadow-[1px_1px_0_#fff]">Cancel</span></Btn>
      <Btn label="Dialog" className="ml-0.5 h-4 w-4">
        <svg className="h-2.5 w-3" viewBox="0 0 12 10" fill="none" stroke="#000" strokeWidth="1.500" aria-hidden="true"><path d="M1 1h10v8H1zM1 6h10" /></svg>
      </Btn>
    </section>
  );
}

function Coord({ id, label }: { id: string; label: string }) {
  return (
    <div className="flex h-[13px] items-center gap-1">
      <label htmlFor={id} className="w-[19px] shrink-0 text-right text-[10px] font-bold">{label}</label>
      <input id={id} defaultValue="*****" className="h-3 w-[92px] bg-white text-[10px] outline-none" />
    </div>
  );
}

const deltaIcon = (
  <svg className="h-3 w-[11px] shrink-0" viewBox="0 0 11 12" fill="none" stroke="#000" aria-hidden="true">
    <path d="M0 11h11" strokeWidth="2" />
    <path d="M2 10l3.500-8L9 10" strokeWidth="2" />
  </svg>
);

function Coordinates() {
  return (
    <section className={clsx(BAR, FACE, 'top-[604px] left-[212px] h-[34px] w-[601px] gap-1 p-px')} aria-label="Coordinate box">
      <Handle label="Close coordinate box" />
      <Btn label="Origin" className="ml-0.5 h-[26px] w-[26px]">
        <Icon><path d="M4 3.500h1l2 2h2l2-2h1M4 12.500h1l2-2h2l2 2h1M6 5v6M10 5v6" strokeWidth="1.6" /></Icon>
      </Btn>
      <Btn label="Skewed grid" disabled className="h-[26px] w-[26px]">
        <Icon size="w-5 h-5" box="0 0 20 20">
          <path d="M2 7l16-6M2 12l16-6M2 17l16-6M2 20l16-6" strokeDasharray="2 1" />
          <path d="M4 15h7M7.500 11v8M9 15l9-4" strokeWidth="1.500" />
        </Icon>
      </Btn>
      <Btn label="Grid snap" disabled className="h-[26px] w-[30px]">
        <Icon size="w-5 h-5" box="0 0 20 20">
          <path d="M0 2.500h20M0 6.500h20M0 10.500h20M0 14.500h20M0 18.500h20" strokeDasharray="1 2" />
          <path d="M5.500 3v12h13M3 5l2.500-3L8 5" strokeWidth="1.500" />
        </Icon>
      </Btn>
      <Btn label="Gravity" more disabled className="h-[26px] w-[30px]">
        <Icon><path d="M3 8.500h10M8.500 4v10" /></Icon>
      </Btn>
      <Divider />
      <Btn label="Relative xy" pressed className="h-[26px] w-[13px]">{deltaIcon}</Btn>
      <div>
        <Coord id="dx" label="Δx:" />
        <Coord id="dy" label="Δy:" />
      </div>
      <Divider />
      <Btn label="Relative polar" pressed className="h-[26px] w-[13px]">{deltaIcon}</Btn>
      <div>
        <Coord id="dr" label="Δr:" />
        <Coord id="da" label="a:" />
      </div>
      <Divider />
      <Btn label="Elevation origin" more disabled className="h-[26px] w-[30px]">
        <Icon><path d="M1 2l4 2h5l4-3-2 5v4l3 5-5-2H6l-4 2 2-5V6z" fill="currentColor" /></Icon>
      </Btn>
      <div className="min-w-0 flex-1">
        <Coord id="dz" label="Δz:" />
        <div className="flex h-[13px] items-center justify-between pr-0.5 pl-1 text-[10px] whitespace-nowrap">
          to Project Zero
          <Btn label="Elevation reference" className="h-3 w-3"><Tri dir="right" /></Btn>
        </div>
      </div>
    </section>
  );
}

function EditingMotion() {
  return (
    <section className={clsx(BAR, FACE, 'top-[517px] left-[637px] h-[87px] w-[288px] p-px')} aria-label="3D navigation">
      <Handle label="Close 3D navigation" />
      <div className="flex h-full w-[121px] shrink-0 flex-col pl-1.5">
        <h3 className="h-4 text-center leading-4">Editing-Motion</h3>
        <div className="flex">
          <Btn label="Edit" pressed className="h-7 w-[27px]">
            <Icon size="w-6 h-6" box="0 0 24 24">
              <path d="M2.500 5.500h10v3h-10zM4 7h1M7 7h1" strokeWidth="1.500" />
              <path d="M6.500 14.500h5v2h5v5h-10z" fill="#fff" strokeWidth="1.500" />
              <path d="M14 4v11l3-2 2 5 2-1-2-5h3z" fill="#000" />
            </Icon>
          </Btn>
          <Btn label="Walk" className="h-7 w-[27px]">
            <Icon size="w-6 h-6" box="0 0 24 24">
              <path d="M2 5h3v4H2zM5 6l4-2v6L5 8z" fill="#000" />
              <path d="M16 3h3v3h-3z" fill="#000" />
              <path d="M15 8l-4 2-2 3M15 7l4 3 2 4M15 8v6M14 14l-3 3-2 5M16 14l2 3v5" strokeWidth="1.600" />
            </Icon>
          </Btn>
          <Btn label="Fly" className="h-7 w-[27px]">
            <Icon size="w-6 h-6" box="0 0 24 24">
              <path d="M12 1l4 4h-3v6h6V8l4 4-4 4v-3h-6v6h3l-4 4-4-4h3v-6H5v3l-4-4 4-4v3h6V5H8z" fill="#fff" stroke="#c8c7b6" />
              <path d="M10 8h4v5h-4z" fill="#000" />
              <path d="M12 13v5M11 13l-3 5M13 13l3 5" />
            </Icon>
          </Btn>
          <Btn label="Orbit" className="h-7 w-[27px]">
            <Icon size="w-6 h-6" box="0 0 24 24">
              <circle cx="12" cy="12" r="8.500" stroke="#fff" strokeWidth="4" strokeDasharray="44 10" />
              <circle cx="12" cy="12" r="11" stroke="#bbb" strokeDasharray="30 8" />
              <path d="M8 10h1l2 1V8h4v5h-4v-1l-2 1H8z" fill="#000" />
              <path d="M13 13v6M12 13l-3 6M14 13l3 6" />
            </Icon>
          </Btn>
        </div>
        <div className="flex pt-1.5">
          <Btn label="Marquee" className="mt-0.5 h-7 w-3.5">
            <Icon size="w-3 h-6" box="0 0 12 24">
              <path d="M1.500 2.500h8v18h-8z" strokeDasharray="1 1" />
              <path d="M3 5l2 3 4-5M3 16h5l1 3-2 2H4" strokeWidth="1.500" />
            </Icon>
          </Btn>
          <Btn label="Insert point" className="mt-0.5 h-7 w-3.5">
            <Icon size="w-3 h-6" box="0 0 12 24">
              <path d="M5 7.500h6M8 5v5" strokeWidth="1.500" />
              <path d="M2 15h2v2H2zM6 18h2v2H6zM8 13h1v1H8zM2 21h2v2H2z" fill="#000" stroke="none" />
            </Icon>
          </Btn>
          <div className="flex flex-1 flex-col pl-2">
            <label htmlFor="cone" className="flex h-3 items-center gap-2 text-[10px]">
              <Icon size="w-6 h-3" box="0 0 24 12">
                <path d="M1 3h3l2 1V1h4v6H6V5L4 6H1z" fill="#000" />
                <path d="M7 7l-3 5M8 7v5M9 7l3 5M12 5l4-3h7M12 5l4 3h7M15 5h8" />
              </Icon>
              45
            </label>
            <input id="cone" type="range" defaultValue={38} className={clsx('h-3.5 w-[66px]', SLIDER)} />
            <div className="mt-[3px] flex w-[62px] justify-between pl-0.5">
              {[0, 1, 2, 3, 4].map((t) => <span key={t} className="h-[3px] w-px bg-black" />)}
            </div>
          </div>
        </div>
      </div>
      <div className="flex h-full items-center pt-1 pr-1.5 pb-1"><Divider /></div>
      <div className="flex h-full min-w-0 flex-1 flex-col pr-1">
        <h3 className="h-4 leading-4">Motion Mode</h3>
        <div className="flex">
          <Btn label="Free motion" pressed className="h-[22px] w-[30px]">
            <Icon size="w-6 h-5" box="0 0 24 20">
              <path d="M3 10l5-1 3-3 8-1v7l-8 2-3 0-5 1z" fill="#888" stroke="#333" />
              <path d="M14 1v18M13 13l-6 6M15 12l5 7M19 6l4-3" />
            </Icon>
          </Btn>
          <Btn label="Planar motion" className="h-[22px] w-[30px]">
            <Icon size="w-7 h-5" box="0 0 28 20">
              <path d="M14 0l13 9-13 10L1 9z" fill="#a4a4a0" stroke="#999" />
              <path d="M14 3v13M5 9.500h18" stroke="#000" />
              <circle cx="14" cy="9.500" r="2" fill="#fff" stroke="#000" />
            </Icon>
          </Btn>
          <Btn label="Projection settings" className="ml-5 h-[22px] w-6">
            <Icon size="w-5 h-5" box="0 0 20 20">
              <path d="M0 11h19v7H0z" fill="#bbb" stroke="none" />
              <path d="M6 5l4-3v14l-4-2z" fill="#fff" />
              <path d="M10 2l4 3v9l-4 2z" fill="#555" />
              <path d="M14 11l4 3-4 2z" fill="#000" />
            </Icon>
          </Btn>
          <Btn label="More options" className="ml-auto h-3 w-3"><Tri dir="right" /></Btn>
        </div>
        <div className="flex h-[18px] items-center gap-5 pl-1.5 text-[11px] whitespace-nowrap">
          <span className="w-[38px]">Look to</span>
          <span>Reset</span>
        </div>
        <div className="flex">
          <Btn label="Look to point" className="h-[22px] w-6">
            <Icon size="w-5 h-5" box="0 0 20 20">
              <path d="M3.500 2.500h13v14h-13z" fill="#fff" stroke="#999" />
              <path d="M10 1v18M1 10h18" />
              <circle cx="10" cy="10" r="2.500" fill="#fff" />
            </Icon>
          </Btn>
          <Btn label="Look to perpendicular" className="h-[22px] w-6">
            <Icon size="w-5 h-5" box="0 0 20 20">
              <path d="M8 3l6 3v8l-6 3z" fill="#fff" stroke="#999" />
              <path d="M9 1v18M3 10h14" />
              <circle cx="9" cy="10" r="2.500" fill="#fff" />
            </Icon>
          </Btn>
          <Btn label="Reset roll" className="ml-1.5 h-[22px] w-6">
            <Icon size="w-5 h-5" box="0 0 20 20">
              <path d="M9 6h4v4H9z" fill="#000" />
              <path d="M11 10v8M10 10l-4 8M12 10l4 8" />
              <path d="M1 10.500h16" strokeDasharray="1 1" />
              <path d="M3 8c0-4 2-6 5-6M1 6l2 3 3-3M18 12c0 3-2 6-4 6" stroke="#1a84d8" />
            </Icon>
          </Btn>
          <Btn label="Reset horizon" className="h-[22px] w-6">
            <Icon size="w-5 h-5" box="0 0 20 20">
              <path d="M11 9h2l2 1V7h3v5h-3v-1l-2 1h-2z" fill="#000" />
              <path d="M16 12v6M15 12l-3 6M17 12l2 6" />
              <path d="M1 10.500h9" strokeDasharray="1 1" />
              <path d="M8 1C1 3 1 16 8 18M1 6l3-2 2 3M1 13l3 3 2-3" stroke="#1a84d8" />
            </Icon>
          </Btn>
          <Btn label="Undo view" className="ml-auto h-[22px] w-5 text-[#000084]"><Icon>{art.undo}</Icon></Btn>
        </div>
      </div>
    </section>
  );
}

function StatusBar() {
  const cell = 'flex h-[17px] items-center justify-between border-t border-l border-[#aca899] px-1';
  return (
    <footer className={clsx('flex h-5 shrink-0 items-end border-t border-white', FACE)}>
      <span className="flex-1 truncate pl-0.5 leading-[17px]">Click an Element or Draw a Selection Area.</span>
      <div className={clsx(cell, 'mr-[3px] w-[101px]')}>
        <Icon size="w-7 h-3.5" box="0 0 28 14">
          <path d="M1 5l4-3h14l4 3v4l-4 4H6L1 9z" fill="#0000f0" stroke="#000" />
          <path d="M1 5l4-3h7L9 7 2 9z" fill="#ff00ff" stroke="#000" />
          <path d="M23 4l3 2-3 3z" fill="#999" stroke="#777" />
          <path d="M9 8.500h5M11.500 7v4M9 10.500h5" stroke="#fff" />
        </Icon>
        <span>C: 12.6 GB</span>
      </div>
      <div className={clsx(cell, 'w-[87px] pr-2 pl-0')}>
        <Icon size="w-7 h-3.5" box="0 0 28 14">
          <path d="M1 1h20l4 4v4H6L1 4z" fill="#000" stroke="#000" />
          <path d="M2 2h18l3 3H5z" fill="#ff00ff" stroke="none" />
          <path d="M7 2l2 3M11 2l2 3M15 2l2 3" stroke="#000" />
          <path d="M26 3l2 2-2 4z" fill="#999" stroke="#888" />
          <path d="M7 13l2-3M11 13l2-3M15 13l2-3M19 13l2-3" stroke="#999" />
        </Icon>
        <span>2.41 GB</span>
      </div>
    </footer>
  );
}

export default function App() {
  return (
    <div className="flex h-screen flex-col overflow-hidden bg-[#ececdc] font-['DejaVu_Sans_Condensed','DejaVu_Sans',sans-serif] text-[11px] leading-none text-black">
      <TitleBar />
      <MenuBar />
      <Toolbar />
      <main className="relative min-h-0 flex-1 overflow-hidden bg-[#848484]">
        <PlanWindow />
        <ModelWindow />
        <InfoBox />
        <ViewPalette />
        <Navigator />
        <ControlBox />
        <Coordinates />
        <EditingMotion />
      </main>
      <StatusBar />
    </div>
  );
}
